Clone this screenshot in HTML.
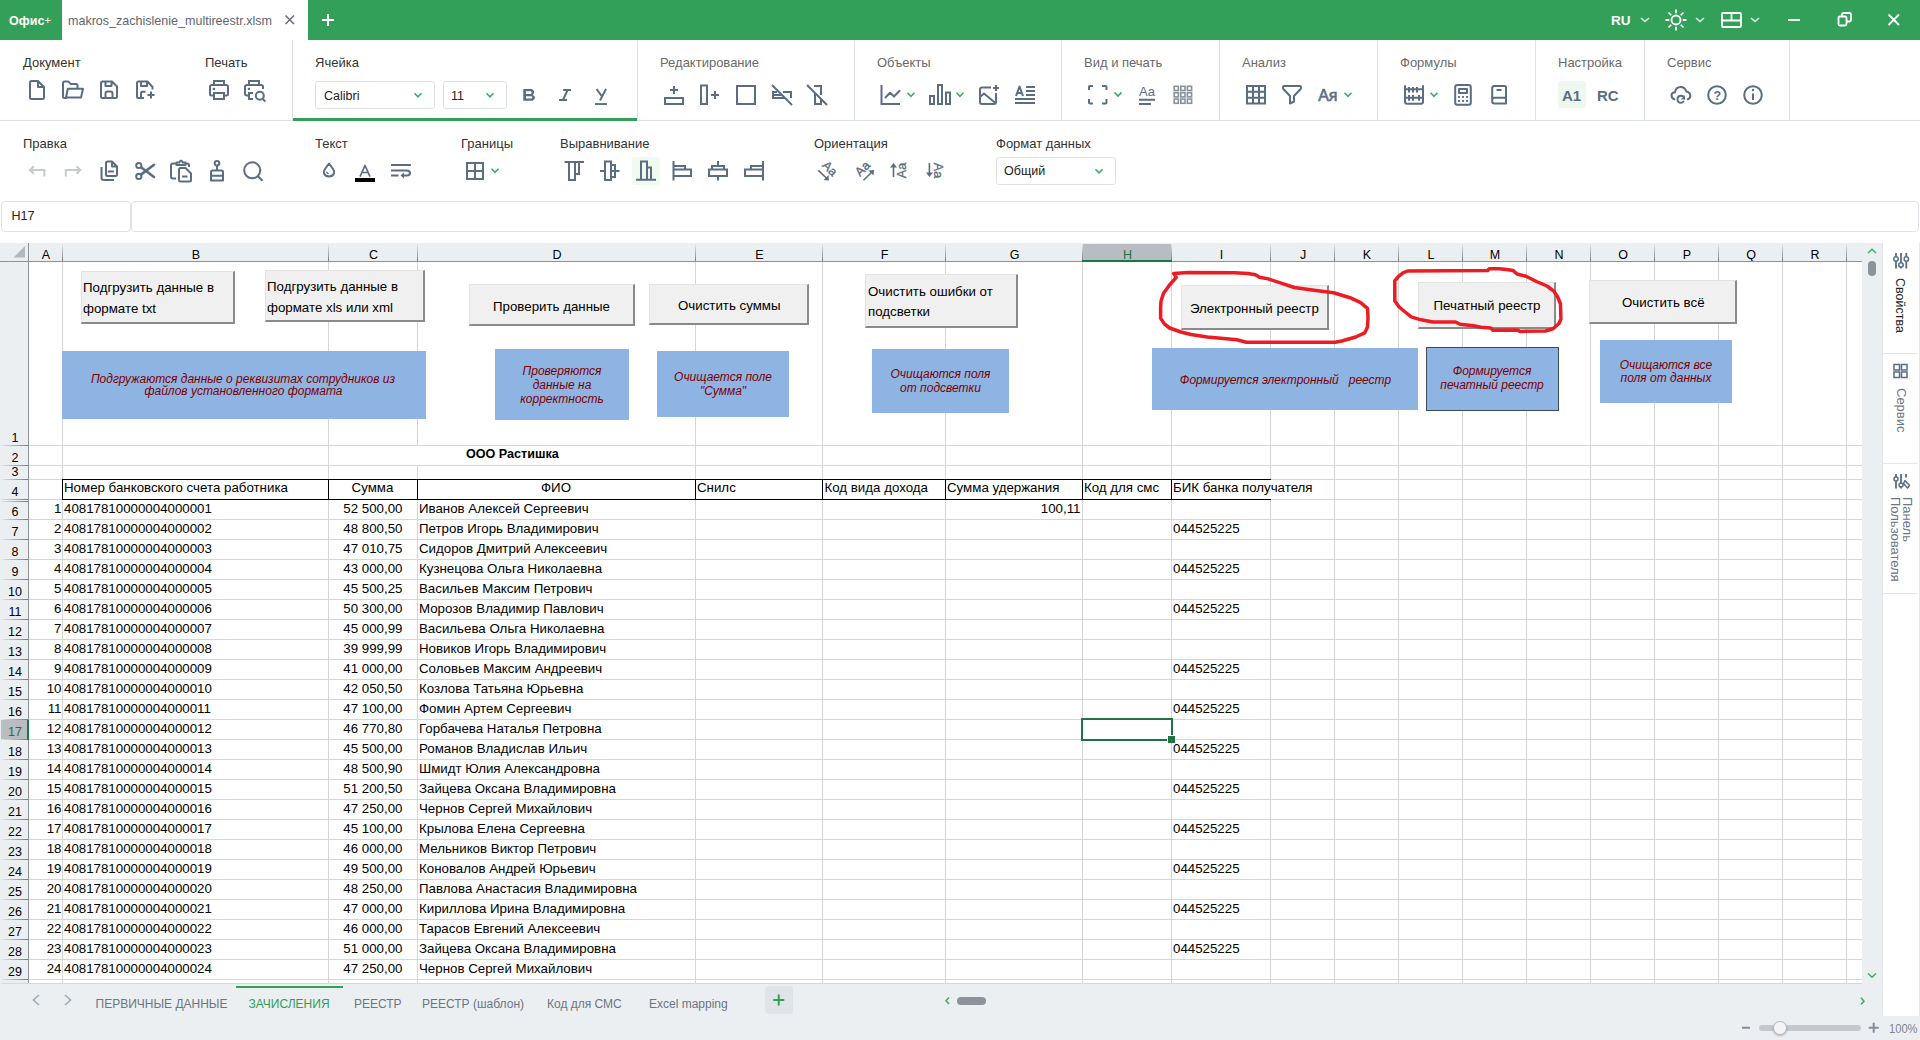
<!DOCTYPE html><html><head><meta charset="utf-8"><style>
*{margin:0;padding:0;box-sizing:border-box}
html,body{width:1920px;height:1040px;overflow:hidden;background:#fff;font-family:"Liberation Sans",sans-serif;position:relative}
.ab{position:absolute}
.t{position:absolute;white-space:nowrap;line-height:1}
svg.ov{position:absolute;left:0;top:0;overflow:visible}
</style></head><body>
<div class="ab" style="left:0px;top:0px;width:1920px;height:40px;background:#33a05a;"></div>
<div class="ab" style="left:62px;top:0px;width:246px;height:40px;background:#fff;"></div>
<div class="t" style="left:9.00px;top:13.57px;font-size:13.5px;color:#fff;font-weight:bold;font-style:normal;transform:scaleX(0.93);transform-origin:0 0;">Офис</div>
<div class="t" style="left:44.50px;top:14.69px;font-size:11px;color:#fff;font-weight:normal;font-style:normal;">+</div>
<div class="t" style="left:68.00px;top:13.57px;font-size:13.5px;color:#5f6470;font-weight:normal;font-style:normal;transform:scaleX(0.928);transform-origin:0 0;">makros_zachislenie_multireestr.xlsm</div>
<div class="t" style="left:1611.00px;top:13.57px;font-size:13.5px;color:#fff;font-weight:bold;font-style:normal;">RU</div>
<div class="ab" style="left:0px;top:120px;width:1920px;height:1px;background:#dde2e9;"></div>
<div class="ab" style="left:637px;top:40px;width:1px;height:80px;background:#dde2e9;"></div>
<div class="ab" style="left:854px;top:40px;width:1px;height:80px;background:#dde2e9;"></div>
<div class="ab" style="left:1061px;top:40px;width:1px;height:80px;background:#dde2e9;"></div>
<div class="ab" style="left:1219px;top:40px;width:1px;height:80px;background:#dde2e9;"></div>
<div class="ab" style="left:1377px;top:40px;width:1px;height:80px;background:#dde2e9;"></div>
<div class="ab" style="left:1535px;top:40px;width:1px;height:80px;background:#dde2e9;"></div>
<div class="ab" style="left:1644px;top:40px;width:1px;height:80px;background:#dde2e9;"></div>
<div class="ab" style="left:1789px;top:40px;width:1px;height:80px;background:#dde2e9;"></div>
<div class="ab" style="left:292px;top:40px;width:1px;height:80px;background:#dde2e9;"></div>
<div class="ab" style="left:293px;top:118px;width:344px;height:3px;background:#33a05a;"></div>
<div class="t" style="left:23.00px;top:56.00px;font-size:13px;color:#333;font-weight:normal;font-style:normal;">Документ</div>
<div class="t" style="left:205.00px;top:56.00px;font-size:13px;color:#333;font-weight:normal;font-style:normal;">Печать</div>
<div class="t" style="left:315.00px;top:56.00px;font-size:13px;color:#333;font-weight:normal;font-style:normal;">Ячейка</div>
<div class="t" style="left:660.00px;top:56.00px;font-size:13px;color:#6a6a6a;font-weight:normal;font-style:normal;">Редактирование</div>
<div class="t" style="left:877.00px;top:56.00px;font-size:13px;color:#6a6a6a;font-weight:normal;font-style:normal;">Объекты</div>
<div class="t" style="left:1084.00px;top:56.00px;font-size:13px;color:#6a6a6a;font-weight:normal;font-style:normal;">Вид и печать</div>
<div class="t" style="left:1242.00px;top:56.00px;font-size:13px;color:#6a6a6a;font-weight:normal;font-style:normal;">Анализ</div>
<div class="t" style="left:1400.00px;top:56.00px;font-size:13px;color:#6a6a6a;font-weight:normal;font-style:normal;">Формулы</div>
<div class="t" style="left:1558.00px;top:56.00px;font-size:13px;color:#6a6a6a;font-weight:normal;font-style:normal;">Настройка</div>
<div class="t" style="left:1667.00px;top:56.00px;font-size:13px;color:#6a6a6a;font-weight:normal;font-style:normal;">Сервис</div>
<div class="t" style="left:23.00px;top:137.00px;font-size:13px;color:#333;font-weight:normal;font-style:normal;">Правка</div>
<div class="t" style="left:315.00px;top:137.00px;font-size:13px;color:#333;font-weight:normal;font-style:normal;">Текст</div>
<div class="t" style="left:461.00px;top:137.00px;font-size:13px;color:#333;font-weight:normal;font-style:normal;">Границы</div>
<div class="t" style="left:560.00px;top:137.00px;font-size:13px;color:#333;font-weight:normal;font-style:normal;">Выравнивание</div>
<div class="t" style="left:814.00px;top:137.00px;font-size:13px;color:#333;font-weight:normal;font-style:normal;">Ориентация</div>
<div class="t" style="left:996.00px;top:137.00px;font-size:13px;color:#333;font-weight:normal;font-style:normal;">Формат данных</div>
<div class="ab" style="left:315px;top:81px;width:120px;height:28px;border:1px solid #dde2e9;border-radius:3px"></div>
<div class="t" style="left:324.00px;top:90.22px;font-size:12.5px;color:#222;font-weight:normal;font-style:normal;">Calibri</div>
<div class="ab" style="left:443px;top:81px;width:64px;height:28px;border:1px solid #dde2e9;border-radius:3px"></div>
<div class="t" style="left:451.00px;top:90.22px;font-size:12.5px;color:#222;font-weight:normal;font-style:normal;">11</div>
<div class="ab" style="left:996px;top:157px;width:120px;height:28px;border:1px solid #dde2e9;border-radius:3px"></div>
<div class="t" style="left:1004.00px;top:165.42px;font-size:12.5px;color:#222;font-weight:normal;font-style:normal;">Общий</div>
<div class="ab" style="left:1558px;top:81px;width:28px;height:27px;background:#eef8ee;border-radius:3px"></div>
<div class="ab" style="left:632px;top:157px;width:28px;height:28px;background:#eefbee;border-radius:3px"></div>
<div class="t" style="left:1562.00px;top:88.10px;font-size:15px;color:#5a6d83;font-weight:bold;font-style:normal;">A1</div>
<div class="t" style="left:1597.00px;top:88.10px;font-size:15px;color:#5a6d83;font-weight:bold;font-style:normal;">RC</div>
<div class="ab" style="left:1px;top:201px;width:130px;height:31px;border:1px solid #dde2e9;border-radius:4px"></div>
<div class="t" style="left:11.50px;top:210.33px;font-size:12.6px;color:#222;font-weight:normal;font-style:normal;">H17</div>
<div class="ab" style="left:131px;top:201px;width:1788px;height:31px;border:1px solid #dde2e9;border-radius:4px"></div>
<div class="ab" style="left:0px;top:243px;width:1862px;height:18px;background:#eceff2;"></div>
<div class="ab" style="left:0px;top:243px;width:28px;height:740px;background:#eceff2;"></div>
<div class="ab" style="left:1082px;top:244px;width:90px;height:16px;background:#b9bcc1;"></div>
<div class="ab" style="left:1px;top:720px;width:26px;height:19px;background:#b9bcc1;"></div>
<div class="ab" style="left:62px;top:262px;width:1px;height:721px;background:#d6d6d6;"></div>
<div class="ab" style="left:328px;top:262px;width:1px;height:721px;background:#d6d6d6;"></div>
<div class="ab" style="left:417px;top:262px;width:1px;height:721px;background:#d6d6d6;"></div>
<div class="ab" style="left:695px;top:262px;width:1px;height:721px;background:#d6d6d6;"></div>
<div class="ab" style="left:822px;top:262px;width:1px;height:721px;background:#d6d6d6;"></div>
<div class="ab" style="left:945px;top:262px;width:1px;height:721px;background:#d6d6d6;"></div>
<div class="ab" style="left:1082px;top:262px;width:1px;height:721px;background:#d6d6d6;"></div>
<div class="ab" style="left:1171px;top:262px;width:1px;height:721px;background:#d6d6d6;"></div>
<div class="ab" style="left:1270px;top:262px;width:1px;height:721px;background:#d6d6d6;"></div>
<div class="ab" style="left:1334px;top:262px;width:1px;height:721px;background:#d6d6d6;"></div>
<div class="ab" style="left:1398px;top:262px;width:1px;height:721px;background:#d6d6d6;"></div>
<div class="ab" style="left:1462px;top:262px;width:1px;height:721px;background:#d6d6d6;"></div>
<div class="ab" style="left:1526px;top:262px;width:1px;height:721px;background:#d6d6d6;"></div>
<div class="ab" style="left:1590px;top:262px;width:1px;height:721px;background:#d6d6d6;"></div>
<div class="ab" style="left:1654px;top:262px;width:1px;height:721px;background:#d6d6d6;"></div>
<div class="ab" style="left:1718px;top:262px;width:1px;height:721px;background:#d6d6d6;"></div>
<div class="ab" style="left:1782px;top:262px;width:1px;height:721px;background:#d6d6d6;"></div>
<div class="ab" style="left:1846px;top:262px;width:1px;height:721px;background:#d6d6d6;"></div>
<div class="ab" style="left:29px;top:445px;width:1833px;height:1px;background:#d6d6d6;"></div>
<div class="ab" style="left:29px;top:465px;width:1833px;height:1px;background:#d6d6d6;"></div>
<div class="ab" style="left:29px;top:479px;width:1833px;height:1px;background:#d6d6d6;"></div>
<div class="ab" style="left:29px;top:499px;width:1833px;height:1px;background:#d6d6d6;"></div>
<div class="ab" style="left:29px;top:519px;width:1833px;height:1px;background:#d6d6d6;"></div>
<div class="ab" style="left:29px;top:539px;width:1833px;height:1px;background:#d6d6d6;"></div>
<div class="ab" style="left:29px;top:559px;width:1833px;height:1px;background:#d6d6d6;"></div>
<div class="ab" style="left:29px;top:579px;width:1833px;height:1px;background:#d6d6d6;"></div>
<div class="ab" style="left:29px;top:599px;width:1833px;height:1px;background:#d6d6d6;"></div>
<div class="ab" style="left:29px;top:619px;width:1833px;height:1px;background:#d6d6d6;"></div>
<div class="ab" style="left:29px;top:639px;width:1833px;height:1px;background:#d6d6d6;"></div>
<div class="ab" style="left:29px;top:659px;width:1833px;height:1px;background:#d6d6d6;"></div>
<div class="ab" style="left:29px;top:679px;width:1833px;height:1px;background:#d6d6d6;"></div>
<div class="ab" style="left:29px;top:699px;width:1833px;height:1px;background:#d6d6d6;"></div>
<div class="ab" style="left:29px;top:719px;width:1833px;height:1px;background:#d6d6d6;"></div>
<div class="ab" style="left:29px;top:739px;width:1833px;height:1px;background:#d6d6d6;"></div>
<div class="ab" style="left:29px;top:759px;width:1833px;height:1px;background:#d6d6d6;"></div>
<div class="ab" style="left:29px;top:779px;width:1833px;height:1px;background:#d6d6d6;"></div>
<div class="ab" style="left:29px;top:799px;width:1833px;height:1px;background:#d6d6d6;"></div>
<div class="ab" style="left:29px;top:819px;width:1833px;height:1px;background:#d6d6d6;"></div>
<div class="ab" style="left:29px;top:839px;width:1833px;height:1px;background:#d6d6d6;"></div>
<div class="ab" style="left:29px;top:859px;width:1833px;height:1px;background:#d6d6d6;"></div>
<div class="ab" style="left:29px;top:879px;width:1833px;height:1px;background:#d6d6d6;"></div>
<div class="ab" style="left:29px;top:899px;width:1833px;height:1px;background:#d6d6d6;"></div>
<div class="ab" style="left:29px;top:919px;width:1833px;height:1px;background:#d6d6d6;"></div>
<div class="ab" style="left:29px;top:939px;width:1833px;height:1px;background:#d6d6d6;"></div>
<div class="ab" style="left:29px;top:959px;width:1833px;height:1px;background:#d6d6d6;"></div>
<div class="ab" style="left:29px;top:979px;width:1833px;height:1px;background:#d6d6d6;"></div>
<div class="ab" style="left:62px;top:244px;width:1px;height:17px;background:linear-gradient(#e6e9ec,#767c82);"></div>
<div class="t" style="left:-154.00px;width:400px;text-align:center;top:249.42px;font-size:12.5px;color:#000;font-weight:normal;font-style:normal">A</div>
<div class="ab" style="left:328px;top:244px;width:1px;height:17px;background:linear-gradient(#e6e9ec,#767c82);"></div>
<div class="t" style="left:-4.00px;width:400px;text-align:center;top:249.42px;font-size:12.5px;color:#000;font-weight:normal;font-style:normal">B</div>
<div class="ab" style="left:417px;top:244px;width:1px;height:17px;background:linear-gradient(#e6e9ec,#767c82);"></div>
<div class="t" style="left:173.50px;width:400px;text-align:center;top:249.42px;font-size:12.5px;color:#000;font-weight:normal;font-style:normal">C</div>
<div class="ab" style="left:695px;top:244px;width:1px;height:17px;background:linear-gradient(#e6e9ec,#767c82);"></div>
<div class="t" style="left:357.00px;width:400px;text-align:center;top:249.42px;font-size:12.5px;color:#000;font-weight:normal;font-style:normal">D</div>
<div class="ab" style="left:822px;top:244px;width:1px;height:17px;background:linear-gradient(#e6e9ec,#767c82);"></div>
<div class="t" style="left:559.50px;width:400px;text-align:center;top:249.42px;font-size:12.5px;color:#000;font-weight:normal;font-style:normal">E</div>
<div class="ab" style="left:945px;top:244px;width:1px;height:17px;background:linear-gradient(#e6e9ec,#767c82);"></div>
<div class="t" style="left:684.50px;width:400px;text-align:center;top:249.42px;font-size:12.5px;color:#000;font-weight:normal;font-style:normal">F</div>
<div class="ab" style="left:1082px;top:244px;width:1px;height:17px;background:linear-gradient(#e6e9ec,#767c82);"></div>
<div class="t" style="left:814.50px;width:400px;text-align:center;top:249.42px;font-size:12.5px;color:#000;font-weight:normal;font-style:normal">G</div>
<div class="ab" style="left:1171px;top:244px;width:1px;height:17px;background:linear-gradient(#e6e9ec,#767c82);"></div>
<div class="t" style="left:927.50px;width:400px;text-align:center;top:249.42px;font-size:12.5px;color:#1e7145;font-weight:normal;font-style:normal">H</div>
<div class="ab" style="left:1270px;top:244px;width:1px;height:17px;background:linear-gradient(#e6e9ec,#767c82);"></div>
<div class="t" style="left:1021.50px;width:400px;text-align:center;top:249.42px;font-size:12.5px;color:#000;font-weight:normal;font-style:normal">I</div>
<div class="ab" style="left:1334px;top:244px;width:1px;height:17px;background:linear-gradient(#e6e9ec,#767c82);"></div>
<div class="t" style="left:1103.00px;width:400px;text-align:center;top:249.42px;font-size:12.5px;color:#000;font-weight:normal;font-style:normal">J</div>
<div class="ab" style="left:1398px;top:244px;width:1px;height:17px;background:linear-gradient(#e6e9ec,#767c82);"></div>
<div class="t" style="left:1167.00px;width:400px;text-align:center;top:249.42px;font-size:12.5px;color:#000;font-weight:normal;font-style:normal">K</div>
<div class="ab" style="left:1462px;top:244px;width:1px;height:17px;background:linear-gradient(#e6e9ec,#767c82);"></div>
<div class="t" style="left:1231.00px;width:400px;text-align:center;top:249.42px;font-size:12.5px;color:#000;font-weight:normal;font-style:normal">L</div>
<div class="ab" style="left:1526px;top:244px;width:1px;height:17px;background:linear-gradient(#e6e9ec,#767c82);"></div>
<div class="t" style="left:1295.00px;width:400px;text-align:center;top:249.42px;font-size:12.5px;color:#000;font-weight:normal;font-style:normal">M</div>
<div class="ab" style="left:1590px;top:244px;width:1px;height:17px;background:linear-gradient(#e6e9ec,#767c82);"></div>
<div class="t" style="left:1359.00px;width:400px;text-align:center;top:249.42px;font-size:12.5px;color:#000;font-weight:normal;font-style:normal">N</div>
<div class="ab" style="left:1654px;top:244px;width:1px;height:17px;background:linear-gradient(#e6e9ec,#767c82);"></div>
<div class="t" style="left:1423.00px;width:400px;text-align:center;top:249.42px;font-size:12.5px;color:#000;font-weight:normal;font-style:normal">O</div>
<div class="ab" style="left:1718px;top:244px;width:1px;height:17px;background:linear-gradient(#e6e9ec,#767c82);"></div>
<div class="t" style="left:1487.00px;width:400px;text-align:center;top:249.42px;font-size:12.5px;color:#000;font-weight:normal;font-style:normal">P</div>
<div class="ab" style="left:1782px;top:244px;width:1px;height:17px;background:linear-gradient(#e6e9ec,#767c82);"></div>
<div class="t" style="left:1551.00px;width:400px;text-align:center;top:249.42px;font-size:12.5px;color:#000;font-weight:normal;font-style:normal">Q</div>
<div class="ab" style="left:1846px;top:244px;width:1px;height:17px;background:linear-gradient(#e6e9ec,#767c82);"></div>
<div class="t" style="left:1615.00px;width:400px;text-align:center;top:249.42px;font-size:12.5px;color:#000;font-weight:normal;font-style:normal">R</div>
<div class="ab" style="left:0px;top:261px;width:1862px;height:1px;background:#8d9297;"></div>
<svg class="ov" width="1920" height="1040"><path d="M25 246 V257.5 H13.5 Z" fill="#b4b8bd"/></svg>
<div class="ab" style="left:1082px;top:260px;width:90px;height:2px;background:#107c41;"></div>
<div class="ab" style="left:28px;top:243px;width:1px;height:740px;background:#8d9297;"></div>
<div class="ab" style="left:1px;top:445px;width:27px;height:1px;background:linear-gradient(to right,#e3e6e9,#767c82);"></div>
<div class="t" style="left:1.00px;width:28px;text-align:center;top:432.42px;font-size:12.5px;color:#000;font-weight:normal;font-style:normal">1</div>
<div class="ab" style="left:1px;top:465px;width:27px;height:1px;background:linear-gradient(to right,#e3e6e9,#767c82);"></div>
<div class="t" style="left:1.00px;width:28px;text-align:center;top:452.42px;font-size:12.5px;color:#000;font-weight:normal;font-style:normal">2</div>
<div class="ab" style="left:1px;top:479px;width:27px;height:1px;background:linear-gradient(to right,#e3e6e9,#767c82);"></div>
<div class="t" style="left:1.00px;width:28px;text-align:center;top:466.42px;font-size:12.5px;color:#000;font-weight:normal;font-style:normal">3</div>
<div class="ab" style="left:1px;top:499px;width:27px;height:1px;background:linear-gradient(to right,#e3e6e9,#767c82);"></div>
<div class="t" style="left:1.00px;width:28px;text-align:center;top:486.42px;font-size:12.5px;color:#000;font-weight:normal;font-style:normal">4</div>
<div class="ab" style="left:1px;top:519px;width:27px;height:1px;background:linear-gradient(to right,#e3e6e9,#767c82);"></div>
<div class="t" style="left:1.00px;width:28px;text-align:center;top:506.42px;font-size:12.5px;color:#000;font-weight:normal;font-style:normal">6</div>
<div class="ab" style="left:1px;top:539px;width:27px;height:1px;background:linear-gradient(to right,#e3e6e9,#767c82);"></div>
<div class="t" style="left:1.00px;width:28px;text-align:center;top:526.42px;font-size:12.5px;color:#000;font-weight:normal;font-style:normal">7</div>
<div class="ab" style="left:1px;top:559px;width:27px;height:1px;background:linear-gradient(to right,#e3e6e9,#767c82);"></div>
<div class="t" style="left:1.00px;width:28px;text-align:center;top:546.42px;font-size:12.5px;color:#000;font-weight:normal;font-style:normal">8</div>
<div class="ab" style="left:1px;top:579px;width:27px;height:1px;background:linear-gradient(to right,#e3e6e9,#767c82);"></div>
<div class="t" style="left:1.00px;width:28px;text-align:center;top:566.42px;font-size:12.5px;color:#000;font-weight:normal;font-style:normal">9</div>
<div class="ab" style="left:1px;top:599px;width:27px;height:1px;background:linear-gradient(to right,#e3e6e9,#767c82);"></div>
<div class="t" style="left:1.00px;width:28px;text-align:center;top:586.42px;font-size:12.5px;color:#000;font-weight:normal;font-style:normal">10</div>
<div class="ab" style="left:1px;top:619px;width:27px;height:1px;background:linear-gradient(to right,#e3e6e9,#767c82);"></div>
<div class="t" style="left:1.00px;width:28px;text-align:center;top:606.42px;font-size:12.5px;color:#000;font-weight:normal;font-style:normal">11</div>
<div class="ab" style="left:1px;top:639px;width:27px;height:1px;background:linear-gradient(to right,#e3e6e9,#767c82);"></div>
<div class="t" style="left:1.00px;width:28px;text-align:center;top:626.42px;font-size:12.5px;color:#000;font-weight:normal;font-style:normal">12</div>
<div class="ab" style="left:1px;top:659px;width:27px;height:1px;background:linear-gradient(to right,#e3e6e9,#767c82);"></div>
<div class="t" style="left:1.00px;width:28px;text-align:center;top:646.42px;font-size:12.5px;color:#000;font-weight:normal;font-style:normal">13</div>
<div class="ab" style="left:1px;top:679px;width:27px;height:1px;background:linear-gradient(to right,#e3e6e9,#767c82);"></div>
<div class="t" style="left:1.00px;width:28px;text-align:center;top:666.42px;font-size:12.5px;color:#000;font-weight:normal;font-style:normal">14</div>
<div class="ab" style="left:1px;top:699px;width:27px;height:1px;background:linear-gradient(to right,#e3e6e9,#767c82);"></div>
<div class="t" style="left:1.00px;width:28px;text-align:center;top:686.42px;font-size:12.5px;color:#000;font-weight:normal;font-style:normal">15</div>
<div class="ab" style="left:1px;top:719px;width:27px;height:1px;background:linear-gradient(to right,#e3e6e9,#767c82);"></div>
<div class="t" style="left:1.00px;width:28px;text-align:center;top:706.42px;font-size:12.5px;color:#000;font-weight:normal;font-style:normal">16</div>
<div class="ab" style="left:1px;top:739px;width:27px;height:1px;background:linear-gradient(to right,#e3e6e9,#767c82);"></div>
<div class="t" style="left:1.00px;width:28px;text-align:center;top:726.42px;font-size:12.5px;color:#1e7145;font-weight:normal;font-style:normal">17</div>
<div class="ab" style="left:1px;top:759px;width:27px;height:1px;background:linear-gradient(to right,#e3e6e9,#767c82);"></div>
<div class="t" style="left:1.00px;width:28px;text-align:center;top:746.42px;font-size:12.5px;color:#000;font-weight:normal;font-style:normal">18</div>
<div class="ab" style="left:1px;top:779px;width:27px;height:1px;background:linear-gradient(to right,#e3e6e9,#767c82);"></div>
<div class="t" style="left:1.00px;width:28px;text-align:center;top:766.42px;font-size:12.5px;color:#000;font-weight:normal;font-style:normal">19</div>
<div class="ab" style="left:1px;top:799px;width:27px;height:1px;background:linear-gradient(to right,#e3e6e9,#767c82);"></div>
<div class="t" style="left:1.00px;width:28px;text-align:center;top:786.42px;font-size:12.5px;color:#000;font-weight:normal;font-style:normal">20</div>
<div class="ab" style="left:1px;top:819px;width:27px;height:1px;background:linear-gradient(to right,#e3e6e9,#767c82);"></div>
<div class="t" style="left:1.00px;width:28px;text-align:center;top:806.42px;font-size:12.5px;color:#000;font-weight:normal;font-style:normal">21</div>
<div class="ab" style="left:1px;top:839px;width:27px;height:1px;background:linear-gradient(to right,#e3e6e9,#767c82);"></div>
<div class="t" style="left:1.00px;width:28px;text-align:center;top:826.42px;font-size:12.5px;color:#000;font-weight:normal;font-style:normal">22</div>
<div class="ab" style="left:1px;top:859px;width:27px;height:1px;background:linear-gradient(to right,#e3e6e9,#767c82);"></div>
<div class="t" style="left:1.00px;width:28px;text-align:center;top:846.42px;font-size:12.5px;color:#000;font-weight:normal;font-style:normal">23</div>
<div class="ab" style="left:1px;top:879px;width:27px;height:1px;background:linear-gradient(to right,#e3e6e9,#767c82);"></div>
<div class="t" style="left:1.00px;width:28px;text-align:center;top:866.42px;font-size:12.5px;color:#000;font-weight:normal;font-style:normal">24</div>
<div class="ab" style="left:1px;top:899px;width:27px;height:1px;background:linear-gradient(to right,#e3e6e9,#767c82);"></div>
<div class="t" style="left:1.00px;width:28px;text-align:center;top:886.42px;font-size:12.5px;color:#000;font-weight:normal;font-style:normal">25</div>
<div class="ab" style="left:1px;top:919px;width:27px;height:1px;background:linear-gradient(to right,#e3e6e9,#767c82);"></div>
<div class="t" style="left:1.00px;width:28px;text-align:center;top:906.42px;font-size:12.5px;color:#000;font-weight:normal;font-style:normal">26</div>
<div class="ab" style="left:1px;top:939px;width:27px;height:1px;background:linear-gradient(to right,#e3e6e9,#767c82);"></div>
<div class="t" style="left:1.00px;width:28px;text-align:center;top:926.42px;font-size:12.5px;color:#000;font-weight:normal;font-style:normal">27</div>
<div class="ab" style="left:1px;top:959px;width:27px;height:1px;background:linear-gradient(to right,#e3e6e9,#767c82);"></div>
<div class="t" style="left:1.00px;width:28px;text-align:center;top:946.42px;font-size:12.5px;color:#000;font-weight:normal;font-style:normal">28</div>
<div class="ab" style="left:1px;top:979px;width:27px;height:1px;background:linear-gradient(to right,#e3e6e9,#767c82);"></div>
<div class="t" style="left:1.00px;width:28px;text-align:center;top:966.42px;font-size:12.5px;color:#000;font-weight:normal;font-style:normal">29</div>
<div class="ab" style="left:1px;top:501px;width:27px;height:1px;background:linear-gradient(to right,#e3e6e9,#767c82);"></div>
<div class="ab" style="left:27px;top:720px;width:2px;height:20px;background:#107c41;"></div>
<div class="ab" style="left:62px;top:479px;width:1209px;height:1px;background:#000;"></div>
<div class="ab" style="left:62px;top:499px;width:1209px;height:1px;background:#000;"></div>
<div class="ab" style="left:62px;top:479px;width:1px;height:21px;background:#000;"></div>
<div class="ab" style="left:328px;top:479px;width:1px;height:21px;background:#000;"></div>
<div class="ab" style="left:417px;top:479px;width:1px;height:21px;background:#000;"></div>
<div class="ab" style="left:695px;top:479px;width:1px;height:21px;background:#000;"></div>
<div class="ab" style="left:822px;top:479px;width:1px;height:21px;background:#000;"></div>
<div class="ab" style="left:945px;top:479px;width:1px;height:21px;background:#000;"></div>
<div class="ab" style="left:1082px;top:479px;width:1px;height:21px;background:#000;"></div>
<div class="ab" style="left:1171px;top:479px;width:1px;height:21px;background:#000;"></div>
<div class="ab" style="left:1270px;top:480px;width:1px;height:19px;background:#fff;"></div>
<div class="ab" style="left:417px;top:446px;width:1px;height:19px;background:#fff;"></div>
<div class="t" style="left:465.50px;top:446.74px;font-size:13.3px;color:#000;font-weight:bold;font-style:normal;transform:scaleX(0.946);transform-origin:0 0;">ООО Растишка</div>
<div class="t" style="left:64.00px;top:480.74px;font-size:13.3px;color:#000;font-weight:normal;font-style:normal;">Номер банковского счета работника</div>
<div class="t" style="left:172.50px;width:400px;text-align:center;top:480.74px;font-size:13.3px;color:#000;font-weight:normal;font-style:normal">Сумма</div>
<div class="t" style="left:356.00px;width:400px;text-align:center;top:480.74px;font-size:13.3px;color:#000;font-weight:normal;font-style:normal">ФИО</div>
<div class="t" style="left:697.00px;top:480.74px;font-size:13.3px;color:#000;font-weight:normal;font-style:normal;">Снилс</div>
<div class="t" style="left:824.50px;top:480.74px;font-size:13.3px;color:#000;font-weight:normal;font-style:normal;">Код вида дохода</div>
<div class="t" style="left:947.00px;top:480.74px;font-size:13.3px;color:#000;font-weight:normal;font-style:normal;">Сумма удержания</div>
<div class="t" style="left:1084.00px;top:480.74px;font-size:13.3px;color:#000;font-weight:normal;font-style:normal;">Код для смс</div>
<div class="t" style="left:1173.00px;top:480.74px;font-size:13.3px;color:#000;font-weight:normal;font-style:normal;">БИК банка получателя</div>
<div class="t" style="left:21.50px;width:40px;text-align:right;top:501.74px;font-size:13.3px;color:#000;font-weight:normal">1</div>
<div class="t" style="left:64.00px;top:501.74px;font-size:13.3px;color:#000;font-weight:normal;font-style:normal;">40817810000004000001</div>
<div class="t" style="left:302.50px;width:100px;text-align:right;top:501.74px;font-size:13.3px;color:#000;font-weight:normal">52 500,00</div>
<div class="t" style="left:419.00px;top:501.74px;font-size:13.3px;color:#000;font-weight:normal;font-style:normal;">Иванов Алексей Сергеевич</div>
<div class="t" style="left:21.50px;width:40px;text-align:right;top:521.74px;font-size:13.3px;color:#000;font-weight:normal">2</div>
<div class="t" style="left:64.00px;top:521.74px;font-size:13.3px;color:#000;font-weight:normal;font-style:normal;">40817810000004000002</div>
<div class="t" style="left:302.50px;width:100px;text-align:right;top:521.74px;font-size:13.3px;color:#000;font-weight:normal">48 800,50</div>
<div class="t" style="left:419.00px;top:521.74px;font-size:13.3px;color:#000;font-weight:normal;font-style:normal;">Петров Игорь Владимирович</div>
<div class="t" style="left:21.50px;width:40px;text-align:right;top:541.74px;font-size:13.3px;color:#000;font-weight:normal">3</div>
<div class="t" style="left:64.00px;top:541.74px;font-size:13.3px;color:#000;font-weight:normal;font-style:normal;">40817810000004000003</div>
<div class="t" style="left:302.50px;width:100px;text-align:right;top:541.74px;font-size:13.3px;color:#000;font-weight:normal">47 010,75</div>
<div class="t" style="left:419.00px;top:541.74px;font-size:13.3px;color:#000;font-weight:normal;font-style:normal;">Сидоров Дмитрий Алексеевич</div>
<div class="t" style="left:21.50px;width:40px;text-align:right;top:561.74px;font-size:13.3px;color:#000;font-weight:normal">4</div>
<div class="t" style="left:64.00px;top:561.74px;font-size:13.3px;color:#000;font-weight:normal;font-style:normal;">40817810000004000004</div>
<div class="t" style="left:302.50px;width:100px;text-align:right;top:561.74px;font-size:13.3px;color:#000;font-weight:normal">43 000,00</div>
<div class="t" style="left:419.00px;top:561.74px;font-size:13.3px;color:#000;font-weight:normal;font-style:normal;">Кузнецова Ольга Николаевна</div>
<div class="t" style="left:21.50px;width:40px;text-align:right;top:581.74px;font-size:13.3px;color:#000;font-weight:normal">5</div>
<div class="t" style="left:64.00px;top:581.74px;font-size:13.3px;color:#000;font-weight:normal;font-style:normal;">40817810000004000005</div>
<div class="t" style="left:302.50px;width:100px;text-align:right;top:581.74px;font-size:13.3px;color:#000;font-weight:normal">45 500,25</div>
<div class="t" style="left:419.00px;top:581.74px;font-size:13.3px;color:#000;font-weight:normal;font-style:normal;">Васильев Максим Петрович</div>
<div class="t" style="left:21.50px;width:40px;text-align:right;top:601.74px;font-size:13.3px;color:#000;font-weight:normal">6</div>
<div class="t" style="left:64.00px;top:601.74px;font-size:13.3px;color:#000;font-weight:normal;font-style:normal;">40817810000004000006</div>
<div class="t" style="left:302.50px;width:100px;text-align:right;top:601.74px;font-size:13.3px;color:#000;font-weight:normal">50 300,00</div>
<div class="t" style="left:419.00px;top:601.74px;font-size:13.3px;color:#000;font-weight:normal;font-style:normal;">Морозов Владимир Павлович</div>
<div class="t" style="left:21.50px;width:40px;text-align:right;top:621.74px;font-size:13.3px;color:#000;font-weight:normal">7</div>
<div class="t" style="left:64.00px;top:621.74px;font-size:13.3px;color:#000;font-weight:normal;font-style:normal;">40817810000004000007</div>
<div class="t" style="left:302.50px;width:100px;text-align:right;top:621.74px;font-size:13.3px;color:#000;font-weight:normal">45 000,99</div>
<div class="t" style="left:419.00px;top:621.74px;font-size:13.3px;color:#000;font-weight:normal;font-style:normal;">Васильева Ольга Николаевна</div>
<div class="t" style="left:21.50px;width:40px;text-align:right;top:641.74px;font-size:13.3px;color:#000;font-weight:normal">8</div>
<div class="t" style="left:64.00px;top:641.74px;font-size:13.3px;color:#000;font-weight:normal;font-style:normal;">40817810000004000008</div>
<div class="t" style="left:302.50px;width:100px;text-align:right;top:641.74px;font-size:13.3px;color:#000;font-weight:normal">39 999,99</div>
<div class="t" style="left:419.00px;top:641.74px;font-size:13.3px;color:#000;font-weight:normal;font-style:normal;">Новиков Игорь Владимирович</div>
<div class="t" style="left:21.50px;width:40px;text-align:right;top:661.74px;font-size:13.3px;color:#000;font-weight:normal">9</div>
<div class="t" style="left:64.00px;top:661.74px;font-size:13.3px;color:#000;font-weight:normal;font-style:normal;">40817810000004000009</div>
<div class="t" style="left:302.50px;width:100px;text-align:right;top:661.74px;font-size:13.3px;color:#000;font-weight:normal">41 000,00</div>
<div class="t" style="left:419.00px;top:661.74px;font-size:13.3px;color:#000;font-weight:normal;font-style:normal;">Соловьев Максим Андреевич</div>
<div class="t" style="left:21.50px;width:40px;text-align:right;top:681.74px;font-size:13.3px;color:#000;font-weight:normal">10</div>
<div class="t" style="left:64.00px;top:681.74px;font-size:13.3px;color:#000;font-weight:normal;font-style:normal;">40817810000004000010</div>
<div class="t" style="left:302.50px;width:100px;text-align:right;top:681.74px;font-size:13.3px;color:#000;font-weight:normal">42 050,50</div>
<div class="t" style="left:419.00px;top:681.74px;font-size:13.3px;color:#000;font-weight:normal;font-style:normal;">Козлова Татьяна Юрьевна</div>
<div class="t" style="left:21.50px;width:40px;text-align:right;top:701.74px;font-size:13.3px;color:#000;font-weight:normal">11</div>
<div class="t" style="left:64.00px;top:701.74px;font-size:13.3px;color:#000;font-weight:normal;font-style:normal;">40817810000004000011</div>
<div class="t" style="left:302.50px;width:100px;text-align:right;top:701.74px;font-size:13.3px;color:#000;font-weight:normal">47 100,00</div>
<div class="t" style="left:419.00px;top:701.74px;font-size:13.3px;color:#000;font-weight:normal;font-style:normal;">Фомин Артем Сергеевич</div>
<div class="t" style="left:21.50px;width:40px;text-align:right;top:721.74px;font-size:13.3px;color:#000;font-weight:normal">12</div>
<div class="t" style="left:64.00px;top:721.74px;font-size:13.3px;color:#000;font-weight:normal;font-style:normal;">40817810000004000012</div>
<div class="t" style="left:302.50px;width:100px;text-align:right;top:721.74px;font-size:13.3px;color:#000;font-weight:normal">46 770,80</div>
<div class="t" style="left:419.00px;top:721.74px;font-size:13.3px;color:#000;font-weight:normal;font-style:normal;">Горбачева Наталья Петровна</div>
<div class="t" style="left:21.50px;width:40px;text-align:right;top:741.74px;font-size:13.3px;color:#000;font-weight:normal">13</div>
<div class="t" style="left:64.00px;top:741.74px;font-size:13.3px;color:#000;font-weight:normal;font-style:normal;">40817810000004000013</div>
<div class="t" style="left:302.50px;width:100px;text-align:right;top:741.74px;font-size:13.3px;color:#000;font-weight:normal">45 500,00</div>
<div class="t" style="left:419.00px;top:741.74px;font-size:13.3px;color:#000;font-weight:normal;font-style:normal;">Романов Владислав Ильич</div>
<div class="t" style="left:21.50px;width:40px;text-align:right;top:761.74px;font-size:13.3px;color:#000;font-weight:normal">14</div>
<div class="t" style="left:64.00px;top:761.74px;font-size:13.3px;color:#000;font-weight:normal;font-style:normal;">40817810000004000014</div>
<div class="t" style="left:302.50px;width:100px;text-align:right;top:761.74px;font-size:13.3px;color:#000;font-weight:normal">48 500,90</div>
<div class="t" style="left:419.00px;top:761.74px;font-size:13.3px;color:#000;font-weight:normal;font-style:normal;">Шмидт Юлия Александровна</div>
<div class="t" style="left:21.50px;width:40px;text-align:right;top:781.74px;font-size:13.3px;color:#000;font-weight:normal">15</div>
<div class="t" style="left:64.00px;top:781.74px;font-size:13.3px;color:#000;font-weight:normal;font-style:normal;">40817810000004000015</div>
<div class="t" style="left:302.50px;width:100px;text-align:right;top:781.74px;font-size:13.3px;color:#000;font-weight:normal">51 200,50</div>
<div class="t" style="left:419.00px;top:781.74px;font-size:13.3px;color:#000;font-weight:normal;font-style:normal;">Зайцева Оксана Владимировна</div>
<div class="t" style="left:21.50px;width:40px;text-align:right;top:801.74px;font-size:13.3px;color:#000;font-weight:normal">16</div>
<div class="t" style="left:64.00px;top:801.74px;font-size:13.3px;color:#000;font-weight:normal;font-style:normal;">40817810000004000016</div>
<div class="t" style="left:302.50px;width:100px;text-align:right;top:801.74px;font-size:13.3px;color:#000;font-weight:normal">47 250,00</div>
<div class="t" style="left:419.00px;top:801.74px;font-size:13.3px;color:#000;font-weight:normal;font-style:normal;">Чернов Сергей Михайлович</div>
<div class="t" style="left:21.50px;width:40px;text-align:right;top:821.74px;font-size:13.3px;color:#000;font-weight:normal">17</div>
<div class="t" style="left:64.00px;top:821.74px;font-size:13.3px;color:#000;font-weight:normal;font-style:normal;">40817810000004000017</div>
<div class="t" style="left:302.50px;width:100px;text-align:right;top:821.74px;font-size:13.3px;color:#000;font-weight:normal">45 100,00</div>
<div class="t" style="left:419.00px;top:821.74px;font-size:13.3px;color:#000;font-weight:normal;font-style:normal;">Крылова Елена Сергеевна</div>
<div class="t" style="left:21.50px;width:40px;text-align:right;top:841.74px;font-size:13.3px;color:#000;font-weight:normal">18</div>
<div class="t" style="left:64.00px;top:841.74px;font-size:13.3px;color:#000;font-weight:normal;font-style:normal;">40817810000004000018</div>
<div class="t" style="left:302.50px;width:100px;text-align:right;top:841.74px;font-size:13.3px;color:#000;font-weight:normal">46 000,00</div>
<div class="t" style="left:419.00px;top:841.74px;font-size:13.3px;color:#000;font-weight:normal;font-style:normal;">Мельников Виктор Петрович</div>
<div class="t" style="left:21.50px;width:40px;text-align:right;top:861.74px;font-size:13.3px;color:#000;font-weight:normal">19</div>
<div class="t" style="left:64.00px;top:861.74px;font-size:13.3px;color:#000;font-weight:normal;font-style:normal;">40817810000004000019</div>
<div class="t" style="left:302.50px;width:100px;text-align:right;top:861.74px;font-size:13.3px;color:#000;font-weight:normal">49 500,00</div>
<div class="t" style="left:419.00px;top:861.74px;font-size:13.3px;color:#000;font-weight:normal;font-style:normal;">Коновалов Андрей Юрьевич</div>
<div class="t" style="left:21.50px;width:40px;text-align:right;top:881.74px;font-size:13.3px;color:#000;font-weight:normal">20</div>
<div class="t" style="left:64.00px;top:881.74px;font-size:13.3px;color:#000;font-weight:normal;font-style:normal;">40817810000004000020</div>
<div class="t" style="left:302.50px;width:100px;text-align:right;top:881.74px;font-size:13.3px;color:#000;font-weight:normal">48 250,00</div>
<div class="t" style="left:419.00px;top:881.74px;font-size:13.3px;color:#000;font-weight:normal;font-style:normal;">Павлова Анастасия Владимировна</div>
<div class="t" style="left:21.50px;width:40px;text-align:right;top:901.74px;font-size:13.3px;color:#000;font-weight:normal">21</div>
<div class="t" style="left:64.00px;top:901.74px;font-size:13.3px;color:#000;font-weight:normal;font-style:normal;">40817810000004000021</div>
<div class="t" style="left:302.50px;width:100px;text-align:right;top:901.74px;font-size:13.3px;color:#000;font-weight:normal">47 000,00</div>
<div class="t" style="left:419.00px;top:901.74px;font-size:13.3px;color:#000;font-weight:normal;font-style:normal;">Кириллова Ирина Владимировна</div>
<div class="t" style="left:21.50px;width:40px;text-align:right;top:921.74px;font-size:13.3px;color:#000;font-weight:normal">22</div>
<div class="t" style="left:64.00px;top:921.74px;font-size:13.3px;color:#000;font-weight:normal;font-style:normal;">40817810000004000022</div>
<div class="t" style="left:302.50px;width:100px;text-align:right;top:921.74px;font-size:13.3px;color:#000;font-weight:normal">46 000,00</div>
<div class="t" style="left:419.00px;top:921.74px;font-size:13.3px;color:#000;font-weight:normal;font-style:normal;">Тарасов Евгений Алексеевич</div>
<div class="t" style="left:21.50px;width:40px;text-align:right;top:941.74px;font-size:13.3px;color:#000;font-weight:normal">23</div>
<div class="t" style="left:64.00px;top:941.74px;font-size:13.3px;color:#000;font-weight:normal;font-style:normal;">40817810000004000023</div>
<div class="t" style="left:302.50px;width:100px;text-align:right;top:941.74px;font-size:13.3px;color:#000;font-weight:normal">51 000,00</div>
<div class="t" style="left:419.00px;top:941.74px;font-size:13.3px;color:#000;font-weight:normal;font-style:normal;">Зайцева Оксана Владимировна</div>
<div class="t" style="left:21.50px;width:40px;text-align:right;top:961.74px;font-size:13.3px;color:#000;font-weight:normal">24</div>
<div class="t" style="left:64.00px;top:961.74px;font-size:13.3px;color:#000;font-weight:normal;font-style:normal;">40817810000004000024</div>
<div class="t" style="left:302.50px;width:100px;text-align:right;top:961.74px;font-size:13.3px;color:#000;font-weight:normal">47 250,00</div>
<div class="t" style="left:419.00px;top:961.74px;font-size:13.3px;color:#000;font-weight:normal;font-style:normal;">Чернов Сергей Михайлович</div>
<div class="t" style="left:1173.00px;top:521.74px;font-size:13.3px;color:#000;font-weight:normal;font-style:normal;">044525225</div>
<div class="t" style="left:1173.00px;top:561.74px;font-size:13.3px;color:#000;font-weight:normal;font-style:normal;">044525225</div>
<div class="t" style="left:1173.00px;top:601.74px;font-size:13.3px;color:#000;font-weight:normal;font-style:normal;">044525225</div>
<div class="t" style="left:1173.00px;top:661.74px;font-size:13.3px;color:#000;font-weight:normal;font-style:normal;">044525225</div>
<div class="t" style="left:1173.00px;top:701.74px;font-size:13.3px;color:#000;font-weight:normal;font-style:normal;">044525225</div>
<div class="t" style="left:1173.00px;top:741.74px;font-size:13.3px;color:#000;font-weight:normal;font-style:normal;">044525225</div>
<div class="t" style="left:1173.00px;top:781.74px;font-size:13.3px;color:#000;font-weight:normal;font-style:normal;">044525225</div>
<div class="t" style="left:1173.00px;top:821.74px;font-size:13.3px;color:#000;font-weight:normal;font-style:normal;">044525225</div>
<div class="t" style="left:1173.00px;top:861.74px;font-size:13.3px;color:#000;font-weight:normal;font-style:normal;">044525225</div>
<div class="t" style="left:1173.00px;top:901.74px;font-size:13.3px;color:#000;font-weight:normal;font-style:normal;">044525225</div>
<div class="t" style="left:1173.00px;top:941.74px;font-size:13.3px;color:#000;font-weight:normal;font-style:normal;">044525225</div>
<div class="t" style="left:1000.50px;width:80px;text-align:right;top:501.74px;font-size:13.3px;color:#000;font-weight:normal">100,11</div>
<div class="ab" style="left:1081px;top:718px;width:92px;height:23px;border:2px solid #217346"></div>
<div class="ab" style="left:1167px;top:735px;width:8px;height:8px;background:#fff;"></div>
<div class="ab" style="left:1168px;top:736px;width:7px;height:7px;background:#217346;"></div>
<div class="ab" style="left:81px;top:271px;width:154px;height:53px;background:#f0f0f0;border-top:1px solid #e3e3e3;border-left:1px solid #e3e3e3;border-right:2px solid #8a8a8a;border-bottom:2px solid #8a8a8a"></div>
<div class="t" style="left:83.00px;top:281.24px;font-size:13.3px;color:#000;font-weight:normal;font-style:normal;">Подгрузить данные в</div>
<div class="t" style="left:83.00px;top:301.74px;font-size:13.3px;color:#000;font-weight:normal;font-style:normal;">формате txt</div>
<div class="ab" style="left:265px;top:270px;width:160px;height:52px;background:#f0f0f0;border-top:1px solid #e3e3e3;border-left:1px solid #e3e3e3;border-right:2px solid #8a8a8a;border-bottom:2px solid #8a8a8a"></div>
<div class="t" style="left:267.00px;top:279.74px;font-size:13.3px;color:#000;font-weight:normal;font-style:normal;">Подгрузить данные в</div>
<div class="t" style="left:267.00px;top:301.24px;font-size:13.3px;color:#000;font-weight:normal;font-style:normal;">формате xls или xml</div>
<div class="ab" style="left:469px;top:284px;width:166px;height:42px;background:#f0f0f0;border-top:1px solid #e3e3e3;border-left:1px solid #e3e3e3;border-right:2px solid #8a8a8a;border-bottom:2px solid #8a8a8a"></div>
<div class="t" style="left:493.00px;top:299.74px;font-size:13.3px;color:#000;font-weight:normal;font-style:normal;">Проверить данные</div>
<div class="ab" style="left:649px;top:284px;width:160px;height:41px;background:#f0f0f0;border-top:1px solid #e3e3e3;border-left:1px solid #e3e3e3;border-right:2px solid #8a8a8a;border-bottom:2px solid #8a8a8a"></div>
<div class="t" style="left:678.00px;top:299.49px;font-size:13.3px;color:#000;font-weight:normal;font-style:normal;">Очистить суммы</div>
<div class="ab" style="left:865px;top:274px;width:153px;height:54px;background:#f0f0f0;border-top:1px solid #e3e3e3;border-left:1px solid #e3e3e3;border-right:2px solid #8a8a8a;border-bottom:2px solid #8a8a8a"></div>
<div class="t" style="left:868.00px;top:284.74px;font-size:13.3px;color:#000;font-weight:normal;font-style:normal;">Очистить ошибки от</div>
<div class="t" style="left:868.00px;top:304.74px;font-size:13.3px;color:#000;font-weight:normal;font-style:normal;">подсветки</div>
<div class="ab" style="left:1181px;top:285px;width:148px;height:45px;background:#f0f0f0;border-top:1px solid #e3e3e3;border-left:1px solid #e3e3e3;border-right:2px solid #8a8a8a;border-bottom:2px solid #8a8a8a"></div>
<div class="t" style="left:1190.00px;top:301.74px;font-size:13.3px;color:#000;font-weight:normal;font-style:normal;">Электронный реестр</div>
<div class="ab" style="left:1418px;top:282px;width:138px;height:47px;background:#f0f0f0;border-top:1px solid #e3e3e3;border-left:1px solid #e3e3e3;border-right:2px solid #8a8a8a;border-bottom:2px solid #8a8a8a"></div>
<div class="t" style="left:1433.50px;top:298.74px;font-size:13.3px;color:#000;font-weight:normal;font-style:normal;">Печатный реестр</div>
<div class="ab" style="left:1589px;top:280px;width:148px;height:44px;background:#f0f0f0;border-top:1px solid #e3e3e3;border-left:1px solid #e3e3e3;border-right:2px solid #8a8a8a;border-bottom:2px solid #8a8a8a"></div>
<div class="t" style="left:1622.00px;top:295.74px;font-size:13.3px;color:#000;font-weight:normal;font-style:normal;">Очистить всё</div>
<div class="ab" style="left:62px;top:351px;width:364px;height:68px;background:#8eb4e3;"></div>
<div class="t" style="left:63.00px;width:360px;text-align:center;top:372.84px;font-size:12px;color:#800000;font-weight:normal;font-style:italic">Подгружаются данные о реквизитах сотрудников из</div>
<div class="t" style="left:63.50px;width:360px;text-align:center;top:385.34px;font-size:12px;color:#800000;font-weight:normal;font-style:italic">файлов установленного формата</div>
<div class="ab" style="left:495px;top:349px;width:134px;height:71px;background:#8eb4e3;"></div>
<div class="t" style="left:382.00px;width:360px;text-align:center;top:364.84px;font-size:12px;color:#800000;font-weight:normal;font-style:italic">Проверяются</div>
<div class="t" style="left:382.00px;width:360px;text-align:center;top:378.84px;font-size:12px;color:#800000;font-weight:normal;font-style:italic">данные на</div>
<div class="t" style="left:382.00px;width:360px;text-align:center;top:392.84px;font-size:12px;color:#800000;font-weight:normal;font-style:italic">корректность</div>
<div class="ab" style="left:657px;top:351px;width:132px;height:66px;background:#8eb4e3;"></div>
<div class="t" style="left:543.00px;width:360px;text-align:center;top:370.84px;font-size:12px;color:#800000;font-weight:normal;font-style:italic">Очищается поле</div>
<div class="t" style="left:543.00px;width:360px;text-align:center;top:384.84px;font-size:12px;color:#800000;font-weight:normal;font-style:italic">"Сумма"</div>
<div class="ab" style="left:872px;top:349px;width:137px;height:64px;background:#8eb4e3;"></div>
<div class="t" style="left:760.50px;width:360px;text-align:center;top:367.84px;font-size:12px;color:#800000;font-weight:normal;font-style:italic">Очищаются поля</div>
<div class="t" style="left:760.50px;width:360px;text-align:center;top:381.59px;font-size:12px;color:#800000;font-weight:normal;font-style:italic">от подсветки</div>
<div class="ab" style="left:1152px;top:348px;width:266px;height:62px;background:#8eb4e3;"></div>
<div class="t" style="left:1105.50px;width:360px;text-align:center;top:374.04px;font-size:12px;color:#800000;font-weight:normal;font-style:italic">Формируется электронный &nbsp; реестр</div>
<div class="ab" style="left:1426px;top:347px;width:133px;height:64px;background:#8eb4e3;border:1px solid #3c4a5a;"></div>
<div class="t" style="left:1312.00px;width:360px;text-align:center;top:365.24px;font-size:12px;color:#800000;font-weight:normal;font-style:italic">Формируется</div>
<div class="t" style="left:1312.00px;width:360px;text-align:center;top:379.04px;font-size:12px;color:#800000;font-weight:normal;font-style:italic">печатный реестр</div>
<div class="ab" style="left:1600px;top:340px;width:132px;height:63px;background:#8eb4e3;"></div>
<div class="t" style="left:1486.00px;width:360px;text-align:center;top:358.59px;font-size:12px;color:#800000;font-weight:normal;font-style:italic">Очищаются все</div>
<div class="t" style="left:1486.00px;width:360px;text-align:center;top:371.84px;font-size:12px;color:#800000;font-weight:normal;font-style:italic">поля от данных</div>
<div class="ab" style="left:0px;top:983px;width:1882px;height:57px;background:#eceff2;"></div>
<div class="ab" style="left:1px;top:983px;width:1861px;height:1px;background:#d5d9de;"></div>
<div class="ab" style="left:1882px;top:1016px;width:38px;height:24px;background:#eceff2;"></div>
<div class="t" style="left:95.50px;top:997.84px;font-size:12px;color:#6b7585;font-weight:normal;font-style:normal;">ПЕРВИЧНЫЕ ДАННЫЕ</div>
<div class="t" style="left:248.50px;top:997.84px;font-size:12px;color:#2e9e52;font-weight:normal;font-style:normal;">ЗАЧИСЛЕНИЯ</div>
<div class="t" style="left:354.00px;top:997.84px;font-size:12px;color:#6b7585;font-weight:normal;font-style:normal;">РЕЕСТР</div>
<div class="t" style="left:422.00px;top:997.84px;font-size:12px;color:#6b7585;font-weight:normal;font-style:normal;">РЕЕСТР (шаблон)</div>
<div class="t" style="left:547.00px;top:997.84px;font-size:12px;color:#6b7585;font-weight:normal;font-style:normal;">Код для СМС</div>
<div class="t" style="left:649.00px;top:997.84px;font-size:12px;color:#6b7585;font-weight:normal;font-style:normal;">Excel mapping</div>
<div class="ab" style="left:236px;top:986px;width:107px;height:2px;background:#33a05a;"></div>
<div class="ab" style="left:765px;top:986px;width:28px;height:28px;background:#e0e4e9;border-radius:4px"></div>
<div class="ab" style="left:957px;top:997px;width:29px;height:8px;background:#8d939a;border-radius:4px"></div>
<div class="ab" style="left:1759px;top:1025px;width:102px;height:6px;background:#c5c9cd;border-radius:3px"></div>
<div class="ab" style="left:1773px;top:1021px;width:14px;height:14px;border-radius:50%;background:#f4f4f4;border:1px solid #b5b9bd;box-shadow:0 1px 2px rgba(0,0,0,.25)"></div>
<div class="t" style="left:1888.50px;top:1022.64px;font-size:12px;color:#7a8590;font-weight:normal;font-style:normal;transform:scaleX(0.93);transform-origin:0 0;">100%</div>
<div class="ab" style="left:1862px;top:243px;width:20px;height:740px;background:#eceff2;"></div>
<div class="ab" style="left:1868px;top:261px;width:8px;height:15px;background:#8d939a;border-radius:4px"></div>
<div class="ab" style="left:1882px;top:243px;width:38px;height:773px;background:#fff;border-left:1px solid #e3e7ec;border-right:1px solid #e3e7ec"></div>
<div class="ab" style="left:1883px;top:353px;width:35px;height:1px;background:#e3e7ec;"></div>
<div class="ab" style="left:1883px;top:463px;width:35px;height:1px;background:#e3e7ec;"></div>
<div class="ab" style="left:1883px;top:593px;width:35px;height:1px;background:#e3e7ec;"></div>
<div class="t" style="left:1893.5px;top:277.5px;font-size:12.5px;color:#222;writing-mode:vertical-rl">Свойства</div>
<div class="t" style="left:1895px;top:388px;font-size:13px;color:#6b7585;writing-mode:vertical-rl">Сервис</div>
<div class="t" style="left:1889px;top:497px;font-size:13px;line-height:12px;color:#6b7585;writing-mode:vertical-rl">Панель<br>Пользователя</div>
<svg class="ov" width="1920" height="1040"><path fill="none" stroke="#5a6d83" stroke-width="2" stroke-linejoin="round" d="M31.5 81 H38 L44 87 V97.5 Q44 99 42.5 99 H31.5 Q30 99 30 97.5 V82.5 Q30 81 31.5 81 Z M38 81 V87 H44"/><path fill="none" stroke="#5a6d83" stroke-width="2" stroke-linejoin="round" d="M67 98 H64.5 Q63 98 63 96.5 V83 Q63 81.5 64.5 81.5 H68.5 L70.5 84 H76 Q77.5 84 77.5 85.5 V88.5 M67.8 88.8 H83 L81 97.5 H66 Z"/><path fill="none" stroke="#5a6d83" stroke-width="2" stroke-linejoin="round" d="M102.5 81.5 H112 L117 86.5 V96.5 Q117 98 115.5 98 H102.5 Q101 98 101 96.5 V83 Q101 81.5 102.5 81.5 Z M105.5 81.5 V86 H111.5 V81.5 M105.5 98 V93.5 Q105.5 91.5 107.5 91.5 H110.5 Q112.5 91.5 112.5 93.5 V98"/><path fill="none" stroke="#5a6d83" stroke-width="2" stroke-linejoin="round" d="M144 98 H138.5 Q137 98 137 96.5 V83 Q137 81.5 138.5 81.5 H147.5 L152.5 87 V89.5 M141 81.5 V86 H147 V81.5 M145.5 91.7 H142.5 Q141 91.7 141 93.2 V98 M151 91.5 V98.5 M147.5 95 H154.5"/><path fill="none" stroke="#5a6d83" stroke-width="2" d="M214 84.5 V81 H224 V84.5 M213 95.5 H211.5 Q210 95.5 210 94 V87 Q210 85 212 85 H226 Q228 85 228 87 V94 Q228 95.5 226.5 95.5 H225 M214 93 H224 V99 H214 Z"/><rect x="212.8" y="87.8" width="2.2" height="2.2" fill="#5a6d83"/><path fill="none" stroke="#5a6d83" stroke-width="2" d="M249 84.5 V81 H259 V84.5 M248 95.5 H247 Q245 95.5 245 93.5 V87 Q245 85 247 85 H261 Q263 85 263 87 V89 M253 93 H249 V99 H253"/><rect x="247.8" y="87.8" width="2.2" height="2.2" fill="#5a6d83"/><circle fill="none" stroke="#5a6d83" stroke-width="2" cx="259.8" cy="95.8" r="4"/><path fill="none" stroke="#5a6d83" stroke-width="2" d="M262.6 98.8 L265.4 101.6"/><path fill="none" stroke="#3aae5f" stroke-width="1.6" d="M414.5 93.2 L418 96.8 L421.5 93.2"/><path fill="none" stroke="#3aae5f" stroke-width="1.6" d="M486.5 93.2 L490 96.8 L493.5 93.2"/><path fill="none" stroke="#3aae5f" stroke-width="1.6" d="M907.5 92.7 L911 96.3 L914.5 92.7"/><path fill="none" stroke="#3aae5f" stroke-width="1.6" d="M956.5 92.7 L960 96.3 L963.5 92.7"/><path fill="none" stroke="#3aae5f" stroke-width="1.6" d="M1114.5 92.4 L1118 96.0 L1121.5 92.4"/><path fill="none" stroke="#3aae5f" stroke-width="1.6" d="M1344.5 92.7 L1348 96.3 L1351.5 92.7"/><path fill="none" stroke="#3aae5f" stroke-width="1.6" d="M1430.5 92.7 L1434 96.3 L1437.5 92.7"/><path fill="none" stroke="#3aae5f" stroke-width="1.6" d="M491.5 168.79999999999998 L495 172.4 L498.5 168.79999999999998"/><path fill="none" stroke="#3aae5f" stroke-width="1.6" d="M1095.5 169.2 L1099 172.8 L1102.5 169.2"/><path fill="none" stroke="#d9eedf" stroke-width="1.6" d="M1641 18 L1645 21.5 L1649 18"/><path fill="none" stroke="#d9eedf" stroke-width="1.6" d="M1696 18 L1700 21.5 L1704 18"/><path fill="none" stroke="#d9eedf" stroke-width="1.6" d="M1751 18 L1755 21.5 L1759 18"/><circle fill="none" stroke="#fff" stroke-width="1.8" cx="1676" cy="20" r="4.5"/><path fill="none" stroke="#fff" stroke-width="1.8" stroke-linecap="round" d="M1683.50 20.00 L1685.80 20.00"/><path fill="none" stroke="#fff" stroke-width="1.8" stroke-linecap="round" d="M1681.30 25.30 L1682.93 26.93"/><path fill="none" stroke="#fff" stroke-width="1.8" stroke-linecap="round" d="M1676.00 27.50 L1676.00 29.80"/><path fill="none" stroke="#fff" stroke-width="1.8" stroke-linecap="round" d="M1670.70 25.30 L1669.07 26.93"/><path fill="none" stroke="#fff" stroke-width="1.8" stroke-linecap="round" d="M1668.50 20.00 L1666.20 20.00"/><path fill="none" stroke="#fff" stroke-width="1.8" stroke-linecap="round" d="M1670.70 14.70 L1669.07 13.07"/><path fill="none" stroke="#fff" stroke-width="1.8" stroke-linecap="round" d="M1676.00 12.50 L1676.00 10.20"/><path fill="none" stroke="#fff" stroke-width="1.8" stroke-linecap="round" d="M1681.30 14.70 L1682.93 13.07"/><path fill="none" stroke="#fff" stroke-width="1.8" stroke-linejoin="round" d="M1723 13 H1740 Q1741 13 1741 14 V26 Q1741 27 1740 27 H1723 Q1722 27 1722 26 V14 Q1722 13 1723 13 Z M1722 20.5 H1741 M1731.5 13 V20.5"/><path fill="none" stroke="#fff" stroke-width="1.8" d="M1788 20 H1800"/><path fill="none" stroke="#fff" stroke-width="1.8" stroke-linejoin="round" d="M1838.5 18 Q1838.5 16.5 1840 16.5 H1845 Q1846.5 16.5 1846.5 18 V24 Q1846.5 25.5 1845 25.5 H1840 Q1838.5 25.5 1838.5 24 Z M1842 16.5 V14.5 Q1842 13 1843.5 13 H1849.5 Q1851 13 1851 14.5 V20 Q1851 21.5 1849.5 21.5 H1846.5"/><path fill="none" stroke="#fff" stroke-width="1.8" d="M1888.5 14.5 L1899 25 M1899 14.5 L1888.5 25"/><path fill="none" stroke="#6a6f7a" stroke-width="1.6" d="M285.5 15.5 L294 24 M294 15.5 L285.5 24"/><path fill="none" stroke="#fff" stroke-width="2" d="M322 20 H334 M328 14 V26"/><path fill="#5a6d83" fill-rule="evenodd" d="M523.3 89 H532 L534 91 V93.3 L532.8 94.9 L534.8 96.6 V98.8 L532.8 100.75 H523.3 Z M526 91.3 V93.9 H531 L531.6 93.3 V91.9 L531 91.3 Z M526 96.2 V98.5 H531.6 L532.2 97.9 V96.8 L531.6 96.2 Z"/><path fill="#5a6d83" d="M563.2 89 H571 V90.9 H568.3 L564.6 98.9 H567.1 V100.9 H559 V98.9 H562.3 L566 90.9 H563.2 Z"/><path fill="none" stroke="#5a6d83" stroke-width="2" d="M596.5 89 L601.4 95.6 M606 89 L600 100.5"/><rect x="595" y="103.1" width="12" height="1.9" fill="#5a6d83"/><path fill="none" stroke="#5a6d83" stroke-width="2" d="M665 98 H683 V104 H665 Z M670 90 H678 M674 86 V94"/><path fill="none" stroke="#5a6d83" stroke-width="2" d="M701 85.5 H707 V104 H701 Z M711 95 H719 M715 91 V99"/><path fill="none" stroke="#5a6d83" stroke-width="2" d="M737 86 H755 V104 H737 Z"/><path fill="none" stroke="#5a6d83" stroke-width="2" d="M773 95 V92 H777 M781 95 H773 V98 H785 M783 92 H791 V98" /><path fill="none" stroke="#5a6d83" stroke-width="2" d="M772 85 L792 105"/><path fill="none" stroke="#5a6d83" stroke-width="2" d="M815 87 V86 H821 V95 M815 93 V104 H821 V99"/><path fill="none" stroke="#5a6d83" stroke-width="2" d="M807 85 L827 105"/><path fill="none" stroke="#5a6d83" stroke-width="2" d="M881.5 85 V104 H900"/><path fill="none" stroke="#5a6d83" stroke-width="2" stroke-linejoin="round" stroke-linecap="round" d="M885.5 97.5 L890 92.8 L894 96.5 L899.5 90.8"/><path fill="none" stroke="#5a6d83" stroke-width="2" d="M930 96 H934 V104 H930 Z M938 85 H942 V104 H938 Z M946 92.5 H950 V104 H946 Z"/><path fill="none" stroke="#5a6d83" stroke-width="2" stroke-linejoin="round" d="M991 87.5 H982 Q980 87.5 980 89.5 V102 Q980 104 982 104 H994 Q996 104 996 102 V93 M980 97 L984 93.5 L996 103.5 M996 85 V91 M993 88 H999"/><path fill="none" stroke="#5a6d83" stroke-width="2" stroke-linejoin="round" d="M1016 96 L1019.5 86.5 L1023 96 M1017.2 93 H1021.8"/><path fill="none" stroke="#5a6d83" stroke-width="2" d="M1026 87 H1035 M1026 91 H1035 M1026 95 H1035 M1015 99 H1035 M1015 103 H1035"/><path fill="none" stroke="#5a6d83" stroke-width="2" stroke-linejoin="round" d="M1089 90 V87 Q1089 86 1090 86 H1093 M1102 86 H1105.5 Q1106.5 86 1106.5 87 V90 M1106.5 99 V102.5 Q1106.5 103.5 1105.5 103.5 H1102 M1093 103.5 H1090 Q1089 103.5 1089 102.5 V99"/><text x="1139" y="95.7" font-family="Liberation Sans" font-size="13" fill="#5a6d83">Aa</text><path fill="none" stroke="#5a6d83" stroke-width="2" d="M1139 99.8 H1155 M1139 104 H1151"/><rect fill="none" stroke="#8a9199" stroke-width="1.6" x="1174.2" y="86.3" width="4.2" height="4.2"/><rect fill="none" stroke="#8a9199" stroke-width="1.6" x="1174.2" y="92.7" width="4.2" height="4.2"/><rect fill="none" stroke="#8a9199" stroke-width="1.6" x="1174.2" y="99.1" width="4.2" height="4.2"/><rect fill="none" stroke="#8a9199" stroke-width="1.6" x="1180.8" y="86.3" width="4.2" height="4.2"/><rect fill="none" stroke="#8a9199" stroke-width="1.6" x="1180.8" y="92.7" width="4.2" height="4.2"/><rect fill="none" stroke="#8a9199" stroke-width="1.6" x="1180.8" y="99.1" width="4.2" height="4.2"/><rect fill="none" stroke="#8a9199" stroke-width="1.6" x="1187.4" y="86.3" width="4.2" height="4.2"/><rect fill="none" stroke="#8a9199" stroke-width="1.6" x="1187.4" y="92.7" width="4.2" height="4.2"/><rect fill="none" stroke="#8a9199" stroke-width="1.6" x="1187.4" y="99.1" width="4.2" height="4.2"/><path fill="none" stroke="#5a6d83" stroke-width="2" d="M1247 86 H1265 V103.5 H1247 Z M1253 86 V103.5 M1259 86 V103.5 M1247 91.8 H1265 M1247 97.7 H1265"/><path fill="none" stroke="#5a6d83" stroke-width="2" stroke-linejoin="round" d="M1284 86 H1300 Q1301 86 1301 87 V88.5 L1294 96 V101.5 L1290 103.5 V96 L1283 88.5 V87 Q1283 86 1284 86 Z"/><text x="1318.2" y="100.8" font-family="Liberation Sans" font-size="16" fill="#5a6d83" stroke="#5a6d83" stroke-width="0.6">Ая</text><path fill="none" stroke="#5a6d83" stroke-width="2" stroke-linejoin="round" d="M1405 85.3 V101.8 Q1405 103.8 1407 103.8 H1421 Q1423 103.8 1423 101.8 V85.3 M1405 89.3 H1423 M1405 97.8 H1423 M1409 87 V92.5 M1413 87 V92.5 M1417 87 V92.5 M1409 95 V100.8 M1413 95 V100.8 M1419 95 V100.8"/><path fill="none" stroke="#5a6d83" stroke-width="2" stroke-linejoin="round" d="M1457.4 85 H1468.6 Q1470.8 85 1470.8 87.2 V102.6 Q1470.8 104.8 1468.6 104.8 H1457.4 Q1455.2 104.8 1455.2 102.6 V87.2 Q1455.2 85 1457.4 85 Z M1459 89 H1467 V93 H1459 Z"/><rect x="1458.00" y="96.0" width="1.9" height="1.9" fill="#5a6d83"/><rect x="1458.00" y="100.0" width="1.9" height="1.9" fill="#5a6d83"/><rect x="1462.05" y="96.0" width="1.9" height="1.9" fill="#5a6d83"/><rect x="1462.05" y="100.0" width="1.9" height="1.9" fill="#5a6d83"/><rect x="1466.10" y="96.0" width="1.9" height="1.9" fill="#5a6d83"/><rect x="1466.10" y="100.0" width="1.9" height="1.9" fill="#5a6d83"/><path fill="none" stroke="#5a6d83" stroke-width="2" stroke-linejoin="round" d="M1494.3 86 H1504.7 Q1506 86 1506 87.3 V103.5 H1494.3 Q1492.2 103.5 1492.2 101.2 V88.3 Q1492.2 86 1494.3 86 Z M1506 97.8 H1494.3 Q1492.2 97.8 1492.2 100 M1496.5 90 H1501.5"/><path fill="none" stroke="#5a6d83" stroke-width="2" stroke-linecap="round" d="M1674.3 99.3 Q1671.5 98.3 1671.5 95.5 Q1671.5 92.5 1675 92.3 Q1675.8 87 1680.8 87 Q1684.8 87 1686.5 91.5 Q1690.3 92.5 1690.3 96 Q1690.3 98.3 1687.8 99.3"/><path fill="none" stroke="#5a6d83" stroke-width="1.9" stroke-linecap="round" d="M1683.8 96.8 Q1682.5 95.8 1681 95.8 Q1677.5 95.8 1677.5 99.3 Q1677.5 102.8 1681 102.8 Q1682.5 102.8 1683.5 101.5"/><path fill="#5a6d83" d="M1685 95.2 V99.5 H1680.8 Z"/><circle fill="none" stroke="#5a6d83" stroke-width="2" cx="1717" cy="95" r="8.8"/><text x="1713.4" y="99.6" font-family="Liberation Sans" font-size="12.5" font-weight="bold" fill="#5a6d83">?</text><circle fill="none" stroke="#5a6d83" stroke-width="2" cx="1753" cy="95" r="8.8"/><path fill="none" stroke="#5a6d83" stroke-width="2" d="M1753 93.5 V100"/><circle cx="1753" cy="90" r="1.2" fill="#5a6d83"/><path fill="none" stroke="#c5cacf" stroke-width="2" d="M44.4 176.6 V170 H30 M33.8 166.3 L30 170 L33.8 173.8"/><path fill="none" stroke="#c5cacf" stroke-width="2" d="M65.8 176.6 V170 H80 M76.5 166.3 L80.3 170 L76.5 173.8"/><path fill="none" stroke="#5a6d83" stroke-width="2" stroke-linejoin="round" d="M107.5 161.5 H112 L117 166.5 V174.5 Q117 176 115.5 176 H107.5 Q106 176 106 174.5 V163 Q106 161.5 107.5 161.5 Z M112 161.5 V166.5 H117 M107.8 171.5 H113.8 M101.5 167 V177.5 Q101.5 180 104 180 H114"/><circle fill="none" stroke="#5a6d83" stroke-width="2" cx="138.8" cy="165.5" r="2.6"/><circle fill="none" stroke="#5a6d83" stroke-width="2" cx="138.8" cy="176.4" r="2.6"/><path fill="none" stroke="#5a6d83" stroke-width="2.6" stroke-linecap="round" d="M141.3 167.5 L154 177 M141.3 174.4 L154 164.8"/><path fill="none" stroke="#5a6d83" stroke-width="2" stroke-linejoin="round" d="M176 163.5 H173 Q171 163.5 171 165.5 V176.5 Q171 178.5 173 178.5 H176 M176.5 165 V162.5 H179.3 Q181 158.5 182.7 162.5 H185.5 V165 Z M186 163.5 H187 Q189 163.5 189 165.5 V167 M180.5 168 H185.5 L191 173.5 V180 Q191 181.5 189.5 181.5 H180.5 Q179 181.5 179 180 V169.5 Q179 168 180.5 168 Z M182 176.5 H187.5"/><path fill="none" stroke="#5a6d83" stroke-width="2" stroke-linejoin="round" d="M211 180.5 V172 Q211 170.5 212.5 170.5 H221.5 Q223 170.5 223 172 V180.5 Z M211 175.8 H223 M217 170.5 V165.6"/><circle fill="none" stroke="#5a6d83" stroke-width="2" cx="217" cy="163.3" r="2.3"/><circle fill="none" stroke="#5a6d83" stroke-width="2" cx="252.2" cy="170.3" r="8"/><path fill="none" stroke="#5a6d83" stroke-width="2" d="M258 176.2 L262.5 180.7"/><path fill="none" stroke="#5a6d83" stroke-width="2" stroke-linejoin="round" d="M329 163.5 L333 169 Q334.8 171.5 334 173.5 Q332.5 176.5 329 176.5 Q325.5 176.5 324 173.5 Q323.2 171.5 325 169 Z"/><path fill="none" stroke="#5a6d83" stroke-width="1.4" d="M326.5 172 L328.5 174"/><path fill="none" stroke="#5a6d83" stroke-width="1.7" stroke-linejoin="round" d="M360 176.6 L365 165.5 L370 176.6 M361.8 172.5 H368.2"/><rect x="355" y="178" width="20" height="4" fill="#000"/><path fill="none" stroke="#5a6d83" stroke-width="2" d="M391 165 H410.8 M391 170.5 H406.5 Q410 170.5 410 173 Q410 175.5 406.5 175.5 H403 M391 175.5 H398.5"/><path fill="#5a6d83" d="M400.5 175.5 L404 172.5 V178.5 Z"/><path fill="none" stroke="#5a6d83" stroke-width="2" d="M467 163 H483 V179 H467 Z M475 163 V179 M467 171 H483"/><path fill="none" stroke="#5a6d83" stroke-width="2" d="M564.5 162 H584 M569 162 V180 H575 V162 M575 174 H579 V162"/><path fill="none" stroke="#5a6d83" stroke-width="2" d="M600 171 H604 M612 171 H619.5 M605 161.5 H611 V180 H605 Z M611 165 H615 V177 H611"/><path fill="none" stroke="#5a6d83" stroke-width="2" d="M636 179.8 H656 M641 179.8 V161.5 H647 V179.8 M647 167.5 H651 V179.8"/><path fill="none" stroke="#5a6d83" stroke-width="2" d="M673.5 161 V180.5 M673.5 166 H685 V169.5 M673.5 169.5 H691 V176 H673.5"/><path fill="none" stroke="#5a6d83" stroke-width="2" d="M718 161 V165.5 M718 176.5 V180.5 M712 169.5 V166 H724 V169.5 M709 169.5 H727 V176 H709 Z"/><path fill="none" stroke="#5a6d83" stroke-width="2" d="M763 161 V180.5 M763 166 H751 V169.5 M763 169.5 H745 V176 H763"/><text x="830" y="172.8" text-anchor="middle" font-family="Liberation Sans" font-size="12.5" fill="#5a6d83" stroke="#5a6d83" stroke-width="0.35" transform="rotate(45 830 168.5)">Aa</text><text x="862.5" y="172.8" text-anchor="middle" font-family="Liberation Sans" font-size="12.5" fill="#5a6d83" stroke="#5a6d83" stroke-width="0.35" transform="rotate(-45 862.5 168.5)">Aa</text><text x="902" y="174.8" text-anchor="middle" font-family="Liberation Sans" font-size="12.5" fill="#5a6d83" stroke="#5a6d83" stroke-width="0.35" transform="rotate(-90 902 170.5)">Aa</text><text x="938.5" y="174.8" text-anchor="middle" font-family="Liberation Sans" font-size="12.5" fill="#5a6d83" stroke="#5a6d83" stroke-width="0.35" transform="rotate(90 938.5 170.5)">Aa</text><path fill="none" stroke="#5a6d83" stroke-width="1.6" d="M818.3 170.3 L828 179.5"/><path fill="#5a6d83" d="M829 180.5 L823.5 180 L828.5 175 Z"/><path fill="none" stroke="#5a6d83" stroke-width="1.6" d="M863.5 180.3 L873 171"/><path fill="#5a6d83" d="M874 170 L873.5 175.5 L868.5 170.5 Z"/><path fill="none" stroke="#5a6d83" stroke-width="1.6" d="M893.5 177 V165"/><path fill="#5a6d83" d="M893.5 163 L890 167.5 H897 Z"/><path fill="none" stroke="#5a6d83" stroke-width="1.6" d="M929.4 163 V175"/><path fill="#5a6d83" d="M929.4 177 L926 172.5 H933 Z"/><path fill="none" stroke="#ec1c24" stroke-width="3.5" stroke-linejoin="round" stroke-linecap="round" d="M1173.7 273.6 L1188.4 272.4 L1234.2 272.8 L1248.1 273.6 L1255.5 274.8 L1259.6 277.3 L1268.2 278.9 L1279.6 282.6 L1294.3 287.5 L1314.0 290.3 L1333.6 292.8 L1350.0 297.7 L1360.6 302.6 L1367.5 308.3 L1368.0 317.3 L1367.5 327.1 L1364.7 332.9 L1355.7 337.0 L1341.8 341.0 L1335.2 342.3 L1246.5 342.3 L1236.7 339.8 L1223.6 338.6 L1207.2 337.0 L1190.9 334.5 L1181.0 332.0 L1169.6 328.0 L1164.3 323.9 L1160.6 318.1 L1160.6 307.5 L1161.0 301.0 L1163.5 293.2 L1169.6 285.0 L1176.2 277.3 L1173.7 273.6"/><path fill="none" stroke="#ec1c24" stroke-width="3.5" stroke-linejoin="round" stroke-linecap="round" d="M1407.5 271.0 L1487.8 270.6 L1489.2 268.8 L1499.0 268.8 L1506.5 269.5 L1513.2 270.6 L1517.0 274.0 L1526.0 276.2 L1536.5 281.5 L1547.0 286.0 L1553.8 291.2 L1557.5 296.5 L1560.5 304.0 L1560.9 319.0 L1559.0 323.5 L1553.0 328.8 L1545.5 331.0 L1520.0 331.4 L1517.0 329.9 L1493.0 330.2 L1490.8 328.0 L1481.0 327.2 L1473.5 325.8 L1460.0 324.2 L1455.5 322.0 L1433.0 322.0 L1421.0 319.8 L1411.2 316.8 L1404.5 311.5 L1399.2 307.0 L1394.8 301.0 L1394.8 280.8 L1398.5 276.3 L1403.0 272.9 L1407.5 271.0"/><path fill="none" stroke="#a3abb3" stroke-width="1.6" d="M39 995 L33.5 1000 L39 1005 M65 995 L70.5 1000 L65 1005"/><path fill="none" stroke="#33a05a" stroke-width="2" d="M773.2 1000 H784.3 M778.75 994.5 V1005.5"/><path fill="none" stroke="#3aae5f" stroke-width="1.5" d="M949 997.5 L946 1000.8 L949 1004"/><path fill="none" stroke="#3aae5f" stroke-width="1.5" d="M1861 997.8 L1864 1001.2 L1861 1004.5"/><path fill="none" stroke="#858e98" stroke-width="2" d="M1742 1027.8 H1750 M1868.7 1027.8 H1878.7 M1873.7 1022.8 V1032.8"/><path fill="none" stroke="#3aae5f" stroke-width="1.5" d="M1868 253 L1872 249.3 L1876 253"/><path fill="none" stroke="#3aae5f" stroke-width="1.5" d="M1868 973.5 L1872 977.3 L1876 973.5"/><path fill="none" stroke="#5a6d83" stroke-width="1.8" d="M1896 253 V256.8 M1896 261.2 V268.5 M1901 253 V262.8 M1901 267.2 V268.5 M1906.3 253 V256.8 M1906.3 261.2 V268.5"/><circle fill="none" stroke="#5a6d83" stroke-width="1.5" cx="1896" cy="259" r="2.2"/><circle fill="none" stroke="#5a6d83" stroke-width="1.5" cx="1901" cy="265" r="2.2"/><circle fill="none" stroke="#5a6d83" stroke-width="1.5" cx="1906.3" cy="259" r="2.2"/><path fill="none" stroke="#5a6d83" stroke-width="1.5" d="M1894 364.5 H1899.5 V370 H1894 Z M1901.5 364.5 H1907 V370 H1901.5 Z M1894 372 H1899.5 V377.5 H1894 Z M1901.5 372 H1907 V377.5 H1901.5 Z"/><path fill="none" stroke="#5a6d83" stroke-width="1.8" d="M1896 474 V477 M1896 481 V488.5 M1901 474 V483 M1901 487 V488.5 M1906 474 V477.5"/><circle fill="none" stroke="#5a6d83" stroke-width="1.5" cx="1896" cy="479" r="2"/><circle fill="none" stroke="#5a6d83" stroke-width="1.5" cx="1901" cy="485" r="2"/><path fill="none" stroke="#5a6d83" stroke-width="1.5" stroke-linejoin="round" d="M1905 480.5 L1909.5 485.5 L1907.5 488 L1903.5 483.5 Z"/></svg>
</body></html>
